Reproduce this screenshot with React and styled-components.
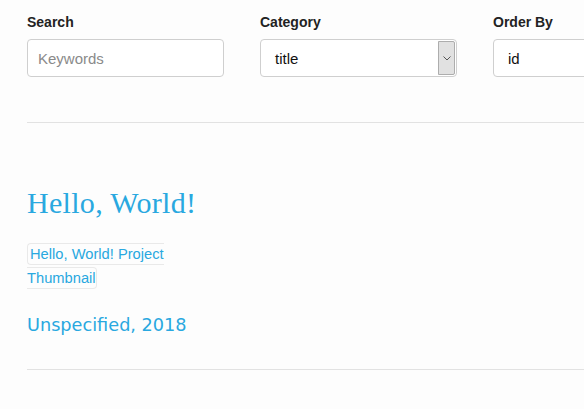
import React from "react";
import styled, { createGlobalStyle } from "styled-components";

const Global = createGlobalStyle`
  html, body { margin: 0; padding: 0; background: #fdfdfd; }
  body { font-family: "Liberation Sans", Arial, sans-serif; overflow: hidden; }
`;

const Page = styled.div`
  width: 584px;
  height: 409px;
  overflow: hidden;
  padding-left: 27px;
  box-sizing: border-box;
`;

const Filters = styled.div`
  display: grid;
  grid-template-columns: 197px 197px 197px;
  column-gap: 36px;
  padding-top: 12px;
  width: 700px;
`;

const Field = styled.div`
  display: flex;
  flex-direction: column;
`;

const Label = styled.label`
  font-weight: bold;
  font-size: 14px;
  line-height: 20px;
  color: #222;
  margin-bottom: 7px;
`;

const Input = styled.input`
  box-sizing: border-box;
  height: 38px;
  width: 100%;
  border: 1px solid #cfcfcf;
  border-radius: 4px;
  background: #fff;
  padding: 0 ${(p) => p.$pad || 10}px;
  font-family: "Liberation Sans", Arial, sans-serif;
  font-size: 15px;
  color: #111;
  outline: none;
  &::placeholder { color: #8a8a8a; }
`;

const SelectBox = styled.div`
  box-sizing: border-box;
  height: 38px;
  display: flex;
  align-items: stretch;
  border: 1px solid #cfcfcf;
  border-radius: 4px;
  background: #fff;
  padding: 1px 1px 1px 0;
`;

const SelectText = styled.div`
  flex: 1;
  display: flex;
  align-items: center;
  padding-left: 14px;
  font-size: 15px;
  color: #111;
`;

const ArrowButton = styled.div`
  width: 15px;
  display: flex;
  align-items: center;
  justify-content: center;
  background: #e1e1e1;
  border: 1px solid #adadad;
  border-radius: 0 2px 2px 0;
`;

const Rule = styled.hr`
  border: none;
  border-top: 1px solid #e2e2e2;
  margin: ${(p) => p.$top}px 0 0 0;
`;

const Title = styled.h1`
  margin: 63px 0 0;
  font-family: "Liberation Serif", "Times New Roman", serif;
  font-weight: normal;
  font-size: 30px;
  letter-spacing: 0.3px;
  line-height: 34px;
  color: #29a8e0;
`;

const ThumbWrap = styled.div`
  width: 140px;
  margin-top: 22px;
  font-size: 14.7px;
  line-height: 24px;
`;

const Thumb = styled.span`
  color: #29a8e0;
  border: 1px solid #e9e9e9;
  border-radius: 4px;
  padding: 2px 0 2px 2px;
`;

const Meta = styled.div`
  margin-top: 23px;
  font-family: "DejaVu Sans", Verdana, sans-serif;
  font-size: 17.7px;
  line-height: 24px;
  color: #29a8e0;
`;

export default function App() {
  return (
    <Page>
      <Global />
      <Filters>
        <Field>
          <Label>Search</Label>
          <Input placeholder="Keywords" />
        </Field>
        <Field>
          <Label>Category</Label>
          <SelectBox>
            <SelectText>title</SelectText>
            <ArrowButton>
              <svg width="8" height="5" viewBox="0 0 8 5">
                <path d="M0.5 0.5 L4 4 L7.5 0.5" fill="none" stroke="#555" strokeWidth="1" />
              </svg>
            </ArrowButton>
          </SelectBox>
        </Field>
        <Field>
          <Label>Order By</Label>
          <Input $pad={14} defaultValue="id" />
        </Field>
      </Filters>
      <Rule $top={45} />
      <Title>Hello, World!</Title>
      <ThumbWrap>
        <Thumb>Hello, World! Project Thumbnail</Thumb>
      </ThumbWrap>
      <Meta>Unspecified, 2018</Meta>
      <Rule $top={32} />
    </Page>
  );
}
